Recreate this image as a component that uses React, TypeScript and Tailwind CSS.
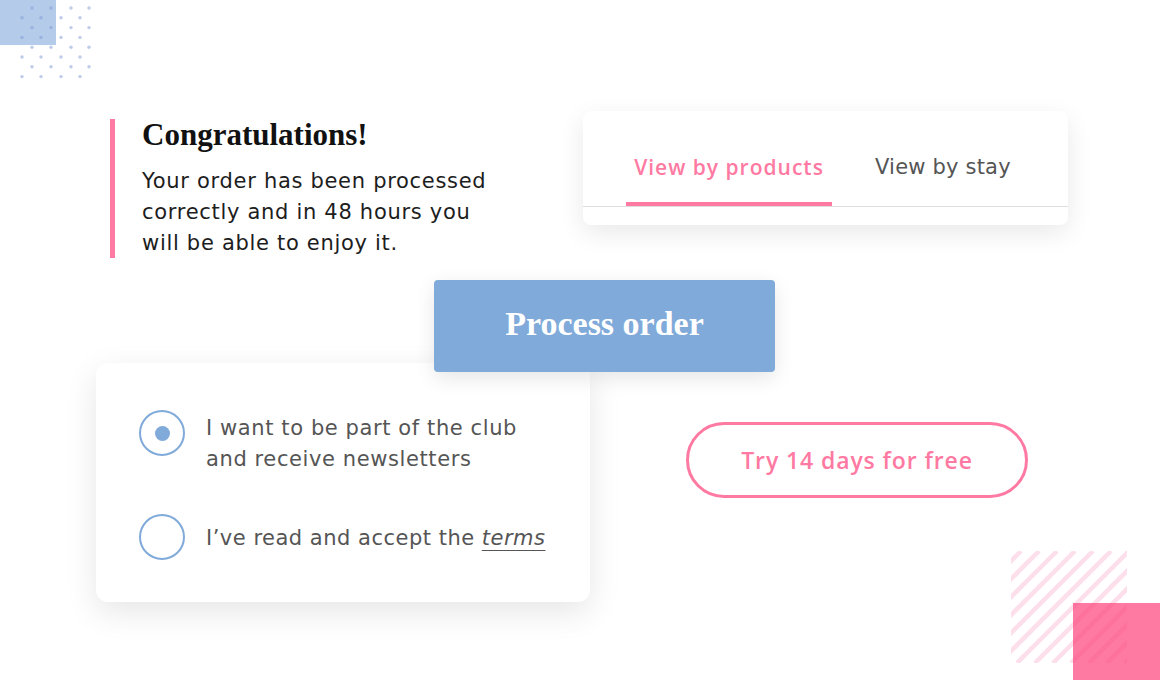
import React from "react"

const PINK = "#ff7aa2"

const sans = { fontFamily: '"DejaVu Sans", "Open Sans", sans-serif' }
const medium = { fontFamily: '"Open Sans", "Noto Sans", sans-serif' }
const serif = { fontFamily: '"Liberation Serif", "DejaVu Serif", serif' }

const DotGrid: React.FC = () => {
  const dots: { x: number; y: number }[] = []
  for (let r = 0; r < 8; r++) {
    const y = 8 + r * 9.8
    const xs = r % 2 === 1 ? [22, 41, 61, 80] : [32, 51, 71, 89]
    xs.forEach((x) => dots.push({ x, y }))
  }
  return (
    <svg className="absolute left-0 top-0" width="100" height="90" viewBox="0 0 100 90">
      <rect x="0" y="0" width="56" height="45" fill="#b4cbea" />
      {dots.map((d, i) => (
        <circle key={i} cx={d.x} cy={d.y} r="1.7" fill="#7e9ad6" fillOpacity="0.5" />
      ))}
    </svg>
  )
}

const Stripes: React.FC = () => {
  const lines = Array.from({ length: 14 }, (_, i) => -120 + i * 18)
  return (
    <svg className="absolute left-[1011px] top-[551px]" width="149" height="129" viewBox="0 0 149 129">
      <rect x="62" y="52" width="87" height="77" fill={PINK} />
      <svg x="0" y="0" width="116" height="112" viewBox="0 0 116 112">
        {lines.map((x, i) => (
          <line key={i} x1={x} y1={112} x2={x + 112} y2={0} stroke="#f0508a" strokeOpacity="0.18" strokeWidth="4.5" />
        ))}
      </svg>
    </svg>
  )
}

const Radio: React.FC<{ checked?: boolean }> = ({ checked }) => (
  <div className="flex h-[46px] w-[46px] shrink-0 items-center justify-center rounded-full border-2 border-[#80aad9]">
    {checked && <div className="h-[15px] w-[15px] rounded-full bg-[#80aad9]" />}
  </div>
)

export default function App() {
  return (
    <div className="relative h-[680px] w-[1160px] overflow-hidden bg-white">
      <DotGrid />
      <Stripes />

      <div className="relative pt-[111px]">
        {/* top row */}
        <div className="flex items-start">
          <div className="ml-[110px] mt-[8px] h-[139px] border-l-[5px] border-[#ff7aa2] pl-[27px]">
            <h1 className="text-[31px] font-bold leading-[32px] text-[#111]" style={serif}>
              Congratulations!
            </h1>
            <p className="mt-[15px] text-[21px] leading-[31px] tracking-[0.7px] text-[#1d1d1d]" style={sans}>
              Your order has been processed
              <br />
              correctly and in 48 hours you
              <br />
              will be able to enjoy it.
            </p>
          </div>

          <div className="ml-auto mr-[92px] w-[485px] overflow-hidden rounded-[8px] bg-white shadow-[0_8px_26px_rgba(0,0,0,0.09)]">
            <div className="flex items-end pl-[43px] pt-[41px]">
              <div className="flex w-[206px] flex-col">
                <span
                  className="pb-[20px] text-center text-[21px] font-semibold leading-[30px] tracking-[1px]"
                  style={{ ...medium, color: PINK }}
                >
                  View by products
                </span>
                <div className="h-[4px] w-full bg-[#ff7aa2]" />
              </div>
              <span className="ml-[43px] pb-[24px] text-[21px] leading-[30px] tracking-[0.2px] text-[#555]" style={sans}>
                View by stay
              </span>
            </div>
            <div className="h-px bg-[#dedede]" />
            <div className="h-[18px]" />
          </div>
        </div>

        {/* process button */}
        <div className="relative z-10 ml-[434px] mt-[22px] flex h-[92px] w-[341px] items-center justify-center rounded-[4px] bg-[#80aad9] pb-[6px] shadow-[0_6px_20px_rgba(0,0,0,0.1)]">
          <span className="text-[34px] font-bold text-white" style={serif}>
            Process order
          </span>
        </div>

        {/* bottom row */}
        <div className="mt-[-9px] flex items-start">
          <div
            className="ml-[96px] flex h-[239px] w-[494px] flex-col rounded-[12px] bg-white pl-[43px] pt-[47px] shadow-[0_10px_32px_rgba(0,0,0,0.1)]"
            style={sans}
          >
            <div className="flex items-start gap-[21px]">
              <Radio checked />
              <p className="mt-[3px] text-[21px] leading-[31px] tracking-[0.6px] text-[#555]">
                I want to be part of the club
                <br />
                and receive newsletters
              </p>
            </div>
            <div className="mt-[39px] flex items-center gap-[21px]">
              <Radio />
              <p className="mt-[2px] text-[21px] leading-[31px] tracking-[0.5px] text-[#555]">
                I’ve read and accept the{" "}
                <span className="italic underline decoration-1 underline-offset-[5px]">terms</span>
              </p>
            </div>
          </div>

          <div className="ml-[96px] mt-[59px] flex h-[76px] w-[342px] items-center justify-center rounded-full border-[3px] border-[#ff7aa2]">
            <span className="text-[23px] font-semibold tracking-[0.9px]" style={{ ...medium, color: PINK }}>
              Try 14 days for free
            </span>
          </div>
        </div>
      </div>
    </div>
  )
}
